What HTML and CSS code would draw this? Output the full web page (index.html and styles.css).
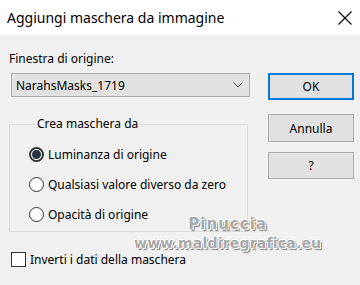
FILE: index.html
```html
<!DOCTYPE html>
<html lang="it">
<head>
    <meta charset="UTF-8">
    <title>Aggiungi maschera da immagine</title>
    <link rel="stylesheet" href="styles.css">
</head>
<body>
    <div class="finestra">
        <div class="titolo">
            <span>Aggiungi maschera da immagine</span>
            <svg class="chiudi" width="14" height="14" viewBox="0 0 14 14">
                <path d="M0.5 0.5 L13.5 13.5 M13.5 0.5 L0.5 13.5" stroke="#000" stroke-width="1.1" fill="none"/>
            </svg>
        </div>
        <div class="contenuto">
            <div class="sinistra">
                <div class="etichetta">Finestra di origine:</div>
                <div class="combo">
                    <span>NarahsMasks_1719</span>
                    <svg width="10" height="6" viewBox="0 0 10 6">
                        <path d="M0.5 0.5 L5 5 L9.5 0.5" stroke="#555" stroke-width="1" fill="none"/>
                    </svg>
                </div>
                <fieldset class="gruppo">
                    <legend>Crea maschera da</legend>
                    <div class="opzione"><span class="radio scelto"></span>Luminanza di origine</div>
                    <div class="opzione"><span class="radio"></span>Qualsiasi valore diverso da zero</div>
                    <div class="opzione"><span class="radio"></span>Opacità di origine</div>
                </fieldset>
                <div class="spunta"><span class="casella"></span>Inverti i dati della maschera</div>
            </div>
            <div class="destra">
                <button class="bottone predefinito">OK</button>
                <button class="bottone annulla">Annulla</button>
                <button class="bottone aiuto">?</button>
            </div>
            <div class="filigrana">
                <div class="nome">Pinuccia</div>
                <div class="sito">www.maldiregrafica.eu</div>
            </div>
        </div>
    </div>
</body>
</html>
```

FILE: styles.css
```css
body
{
    margin: 0;
    font-family: "Noto Sans", "Open Sans", sans-serif;
    font-size: 12px;
    color: #000;
}
.finestra
{
    width: 360px;
    height: 285px;
    background: #f0f0f0;
    overflow: hidden;
}
.titolo
{
    height: 35px;
    background: #fff;
    display: flex;
    align-items: center;
    justify-content: space-between;
    padding: 0 8px 0 7px;
    font-size: 14px;
}
.chiudi
{
    margin-top: 1px;
}
.contenuto
{
    position: relative;
    display: grid;
    grid-template-columns: 241px 86px;
    column-gap: 18px;
    padding-left: 9px;
}
.etichetta
{
    margin-top: 15px;
    line-height: 17px;
}
.combo
{
    margin: 6px 0 0 2px;
    height: 22px;
    border: 1px solid #adadad;
    background: #e1e1e1;
    display: flex;
    align-items: center;
    justify-content: space-between;
    padding: 0 6px 0 4px;
}
.gruppo
{
    margin: 19px 0 0 0;
    padding: 7px 0 8px 19px;
    border: 1px solid #dcdcdc;
    width: 218px;
    height: 99px;
}
.gruppo legend
{
    padding: 0 2px;
    margin-left: 6px;
    line-height: 16px;
}
.opzione
{
    display: flex;
    align-items: center;
    height: 30px;
}
.radio
{
    width: 13px;
    height: 13px;
    border: 1px solid #333;
    border-radius: 50%;
    background: #fff;
    margin-right: 4px;
    position: relative;
}
.radio.scelto
{
    border-width: 2px;
    width: 11px;
    height: 11px;
}
.radio.scelto::after
{
    content: "";
    position: absolute;
    left: 1px;
    top: 1px;
    width: 9px;
    height: 9px;
    border-radius: 50%;
    background: #263445;
}
.spunta
{
    display: flex;
    align-items: center;
    margin: 19px 0 0 2px;
}
.casella
{
    width: 13px;
    height: 13px;
    border: 1px solid #333;
    background: #fff;
    margin-right: 4px;
}
.destra
{
    display: flex;
    flex-direction: column;
    padding-top: 38px;
}
.bottone
{
    font-family: inherit;
    font-size: 12px;
    height: 28px;
    border: 1px solid #adadad;
    background: #e1e1e1;
    color: #000;
    padding: 0;
}
.predefinito
{
    border: 2px solid #0078d7;
    height: 27px;
}
.annulla
{
    margin-top: 14px;
}
.aiuto
{
    margin-top: 10px;
    height: 27px;
}
.filigrana
{
    position: absolute;
    left: 134px;
    top: 180px;
    text-align: center;
    font-family: "DejaVu Sans", sans-serif;
    font-weight: bold;
    color: #a9a9a9;
    text-shadow: 1px 1px 0 #fff, -1px 0 0 #fff, 0 -1px 0 #fff, 2px 2px 1px #777;
    line-height: 19px;
}
.nome
{
    font-size: 15px;
    letter-spacing: 1px;
}
.sito
{
    font-size: 14px;
    letter-spacing: 0.2px;
}
```
